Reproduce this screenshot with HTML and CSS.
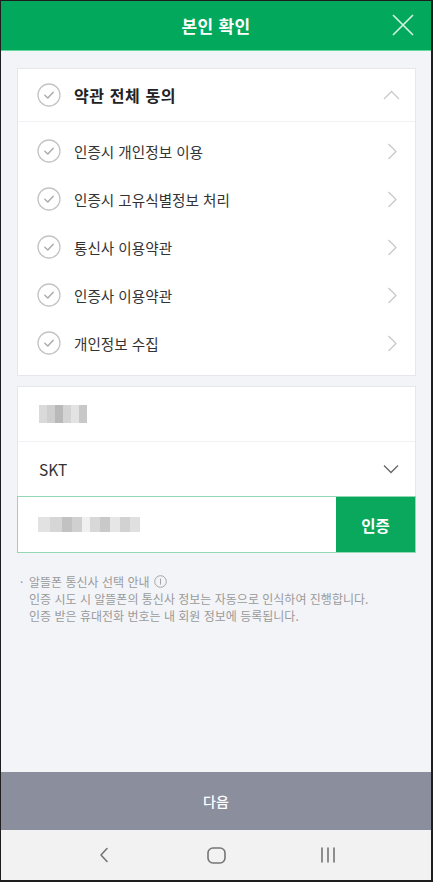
FILE: index.html
```html
<!DOCTYPE html>
<html lang="ko">
  <head>
    <meta charset="UTF-8" />
    <meta name="viewport" content="width=device-width, initial-scale=1.0" />
    <title>본인 확인</title>
    <link rel="stylesheet" href="styles.css">
  </head>
  <body>
    <div id="screen">
      <header id="topbar">
        <h1>본인 확인</h1>
        <button class="close" aria-label="닫기">
          <svg width="22" height="22" viewBox="0 0 22 22">
            <path d="M1 1 L21 21 M21 1 L1 21" />
          </svg>
        </button>
      </header>

      <main id="content">
        <section class="card terms">
          <div class="term term_all">
            <span class="check">
              <svg width="24" height="24" viewBox="0 0 24 24">
                <circle cx="12" cy="12" r="11" />
                <path d="M7.8 12.3 L10.8 15 L16.2 9.2" />
              </svg>
            </span>
            <span class="label">약관 전체 동의</span>
            <svg class="arrow" width="17" height="10" viewBox="0 0 17 10">
              <path d="M1 9 L8.5 1.5 L16 9" />
            </svg>
          </div>
          <ul class="term_list">
            <li class="term">
              <span class="check">
                <svg width="24" height="24" viewBox="0 0 24 24">
                  <circle cx="12" cy="12" r="11" />
                  <path d="M7.8 12.3 L10.8 15 L16.2 9.2" />
                </svg>
              </span>
              <span class="label">인증시 개인정보 이용</span>
              <svg class="arrow" width="10" height="17" viewBox="0 0 10 17">
                <path d="M1.5 1 L9 8.5 L1.5 16" />
              </svg>
            </li>
            <li class="term">
              <span class="check">
                <svg width="24" height="24" viewBox="0 0 24 24">
                  <circle cx="12" cy="12" r="11" />
                  <path d="M7.8 12.3 L10.8 15 L16.2 9.2" />
                </svg>
              </span>
              <span class="label">인증시 고유식별정보 처리</span>
              <svg class="arrow" width="10" height="17" viewBox="0 0 10 17">
                <path d="M1.5 1 L9 8.5 L1.5 16" />
              </svg>
            </li>
            <li class="term">
              <span class="check">
                <svg width="24" height="24" viewBox="0 0 24 24">
                  <circle cx="12" cy="12" r="11" />
                  <path d="M7.8 12.3 L10.8 15 L16.2 9.2" />
                </svg>
              </span>
              <span class="label">통신사 이용약관</span>
              <svg class="arrow" width="10" height="17" viewBox="0 0 10 17">
                <path d="M1.5 1 L9 8.5 L1.5 16" />
              </svg>
            </li>
            <li class="term">
              <span class="check">
                <svg width="24" height="24" viewBox="0 0 24 24">
                  <circle cx="12" cy="12" r="11" />
                  <path d="M7.8 12.3 L10.8 15 L16.2 9.2" />
                </svg>
              </span>
              <span class="label">인증사 이용약관</span>
              <svg class="arrow" width="10" height="17" viewBox="0 0 10 17">
                <path d="M1.5 1 L9 8.5 L1.5 16" />
              </svg>
            </li>
            <li class="term">
              <span class="check">
                <svg width="24" height="24" viewBox="0 0 24 24">
                  <circle cx="12" cy="12" r="11" />
                  <path d="M7.8 12.3 L10.8 15 L16.2 9.2" />
                </svg>
              </span>
              <span class="label">개인정보 수집</span>
              <svg class="arrow" width="10" height="17" viewBox="0 0 10 17">
                <path d="M1.5 1 L9 8.5 L1.5 16" />
              </svg>
            </li>
          </ul>
        </section>

        <section class="card form">
          <div class="field">
            <!-- 이름 (모자이크 처리) -->
            <span class="mosaic mosaic_name"></span>
          </div>
          <div class="field carrier">
            <span class="carrier_name">SKT</span>
            <svg class="arrow" width="16" height="10" viewBox="0 0 16 10">
              <path d="M1 1.5 L8 8.5 L15 1.5" />
            </svg>
          </div>
        </section>

        <div class="phone_row">
          <div class="phone_input">
            <!-- 휴대폰 번호 (모자이크 처리) -->
            <span class="mosaic mosaic_phone"></span>
          </div>
          <button class="verify">인증</button>
        </div>

        <div class="notice">
          <p class="notice_title">
            <span class="dot">·</span>알뜰폰 통신사 선택 안내
            <svg class="info" width="13" height="13" viewBox="0 0 13 13">
              <circle cx="6.5" cy="6.5" r="5.8" />
              <path d="M6.5 3.6 L6.5 9.6" />
            </svg>
          </p>
          <p>인증 시도 시 알뜰폰의 통신사 정보는 자동으로 인식하여 진행합니다.</p>
          <p>인증 받은 휴대전화 번호는 내 회원 정보에 등록됩니다.</p>
        </div>
      </main>

      <button id="next">다음</button>

      <nav id="sysbar">
        <span class="nav_btn">
          <svg width="12" height="16" viewBox="0 0 12 16">
            <path d="M9 1.5 L3 8 L9 14.5" />
          </svg>
        </span>
        <span class="nav_btn">
          <svg width="19" height="17" viewBox="0 0 19 17">
            <rect x="1" y="1" width="17" height="15" rx="5" />
          </svg>
        </span>
        <span class="nav_btn">
          <svg width="16" height="16" viewBox="0 0 16 16">
            <path d="M2 1 L2 15 M8 1 L8 15 M14 1 L14 15" />
          </svg>
        </span>
      </nav>
    </div>
  </body>
</html>
```

FILE: styles.css
```css
* {
  box-sizing: border-box;
}

body {
  margin: 0;
  font-family: "Noto Sans CJK KR", "Noto Sans", sans-serif;
  color: #333;
}

button {
  font-family: inherit;
  border: 0;
  padding: 0;
  cursor: pointer;
}

ul,
p,
h1 {
  margin: 0;
  padding: 0;
}

#screen {
  width: 433px;
  height: 882px;
  display: flex;
  flex-direction: column;
  border: 1px solid #1e1e1e;
  border-right-width: 2px;
  border-bottom-width: 2px;
  background-color: #f3f4f8;
}

/* 상단 타이틀 */
#topbar {
  position: relative;
  height: 50px;
  flex-shrink: 0;
  display: flex;
  align-items: center;
  justify-content: center;
  background-color: #02a85b;
  border-bottom: 1px solid #63d99d;
}

#topbar h1 {
  color: white;
  font-size: 17px;
  font-weight: bold;
  letter-spacing: 0.3px;
}

.close {
  position: absolute;
  right: 17px;
  top: 13px;
  background: none;
  line-height: 0;
}

.close path {
  stroke: #d3f3e1;
  stroke-width: 1.7;
  fill: none;
}

#content {
  flex: 1;
  padding: 17px 15px 0 16px;
}

.card {
  background-color: white;
  border: 1px solid #e5e7ec;
}

/* 약관 */
.term {
  display: flex;
  align-items: center;
  height: 48px;
  padding: 0 15px 0 19px;
  list-style: none;
}

.term_all {
  height: 53px;
  border-bottom: 1px solid #f0f1f4;
}

.term_list {
  padding: 5px 0 8px;
}

.check {
  width: 24px;
  height: 24px;
  margin-right: 13px;
  line-height: 0;
}

.check circle {
  fill: none;
  stroke: #c4c4c4;
  stroke-width: 1.3;
}

.check path {
  fill: none;
  stroke: #a9a9a9;
  stroke-width: 1.4;
  stroke-linecap: round;
  stroke-linejoin: round;
}

.label {
  flex: 1;
  font-size: 14.6px;
  color: #333;
}

.term_all .label {
  font-size: 16px;
  font-weight: bold;
  letter-spacing: 0.6px;
  color: #222;
}

.arrow path {
  fill: none;
  stroke: #c9c9c9;
  stroke-width: 1.3;
}

.term .arrow {
  margin-right: 3px;
}

.term_all .arrow {
  margin-right: 0;
}

/* 입력 */
.form {
  margin-top: 10px;
  border-bottom: 0;
}

.field {
  display: flex;
  align-items: center;
  height: 55px;
  padding: 0 16px 0 21px;
  border-bottom: 1px solid #f0f1f4;
}

.field.carrier {
  height: 54px;
  border-bottom: 0;
}

.carrier_name {
  flex: 1;
  font-size: 15.5px;
  color: #333;
}

.carrier .arrow path {
  stroke: #666;
}

.mosaic {
  display: block;
  height: 18px;
}

.mosaic_name {
  width: 48px;
  background: linear-gradient(90deg, #dadada 0 8px, #cfcfcf 8px 16px, #b9b9b9 16px 24px, #d4d4d4 24px 32px, #e3e3e3 32px 40px, #c8c8c8 40px 48px);
}

.mosaic_phone {
  width: 102px;
  height: 15px;
  background: linear-gradient(90deg, #e2e2e2 0 12px, #d6d6d6 12px 24px, #c2c2c2 24px 34px, #d0d0d0 34px 44px, #f0f0f0 44px 52px, #d8d8d8 52px 62px, #c9c9c9 62px 72px, #e6e6e6 72px 82px, #d2d2d2 82px 92px, #e0e0e0 92px 102px);
}

.phone_row {
  display: flex;
  height: 57px;
  border: 1px solid #92d8b4;
}

.phone_input {
  flex: 1;
  display: flex;
  align-items: center;
  padding-left: 20px;
  background-color: white;
}

.verify {
  width: 79px;
  background-color: #0aa85d;
  color: white;
  font-size: 15.5px;
  font-weight: bold;
}

/* 안내 문구 */
.notice {
  margin-top: 20px;
  padding-left: 3px;
  font-size: 12px;
  line-height: 17px;
  color: #9a9a9a;
}

.notice p {
  padding-left: 9px;
}

.notice .notice_title {
  padding-left: 0;
  display: flex;
  align-items: center;
}

.dot {
  width: 9px;
}

.info {
  margin-left: 5px;
}

.info circle,
.info path {
  fill: none;
  stroke: #a5a5a5;
  stroke-width: 1;
}

#next {
  height: 58px;
  flex-shrink: 0;
  background-color: #8a8e9d;
  color: white;
  font-size: 14px;
  font-weight: 500;
}

#sysbar {
  height: 50px;
  flex-shrink: 0;
  display: flex;
  justify-content: center;
  align-items: center;
  gap: 72px;
  background-color: #f2f2f2;
}

.nav_btn {
  width: 40px;
  display: flex;
  justify-content: center;
  line-height: 0;
}

.nav_btn path,
.nav_btn rect {
  fill: none;
  stroke: #757575;
  stroke-width: 1.6;
  stroke-linecap: round;
  stroke-linejoin: round;
}
```
